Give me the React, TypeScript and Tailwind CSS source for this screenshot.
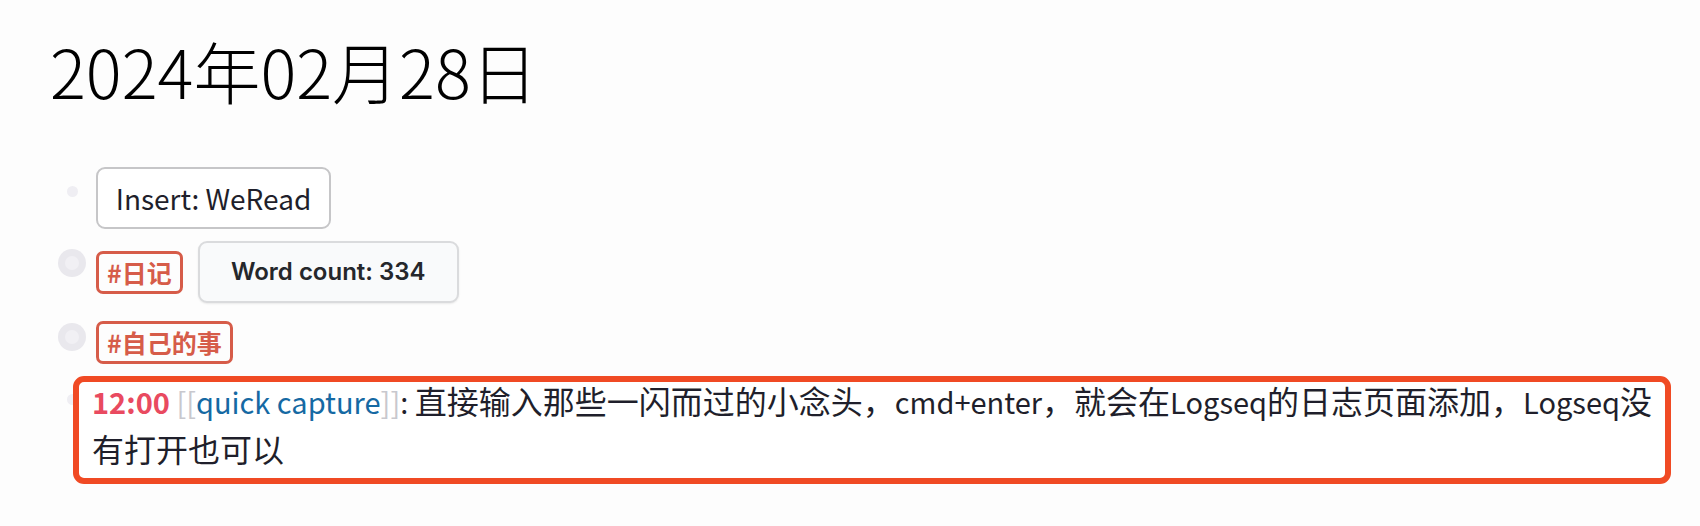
import React from "react";

const CJK = '"Noto Sans CJK SC", "Noto Sans", sans-serif';

function Bullet({ big, offset }: { big?: boolean; offset: number }) {
  return (
    <div className="w-12 flex justify-center shrink-0" style={{ paddingTop: offset }}>
      {big ? (
        <div className="w-[28px] h-[28px] rounded-full bg-[#e9e8ed] flex items-center justify-center">
          <div className="w-[14px] h-[14px] rounded-full bg-[#f1f0f4]" />
        </div>
      ) : (
        <div className="w-[11px] h-[11px] rounded-full bg-[#efeef3]" />
      )}
    </div>
  );
}

function Tag({ children }: { children: React.ReactNode }) {
  return (
    <span
      className="inline-flex items-center h-[43px] px-[8px] border-[3px] border-[#d65c49] rounded-[7px] text-[#d65c49] text-[25px] font-bold leading-none"
      style={{ fontFamily: CJK }}
    >
      {children}
    </span>
  );
}

function L({ children, className = "" }: { children: React.ReactNode; className?: string }) {
  return <span className={`text-[29px] ${className}`}>{children}</span>;
}

export default function App() {
  return (
    <div className="min-h-[526px] w-[1700px] bg-[#fdfdfd] pl-[48px] pt-[24px]" style={{ fontFamily: CJK }}>
      <h1 className="text-[67px] leading-[92px] font-light text-black ml-[2px]">2024年02月28日</h1>

      <div className="mt-[51px] flex flex-col">
        {/* Row 1 */}
        <div className="flex items-start h-[62px]">
          <Bullet offset={19} />
          <div className="h-[62px] w-[235px] border-2 border-[#c6c6c8] rounded-[9px] bg-white flex items-center justify-center text-[28px] text-[#1f1f2b]">
            Insert: WeRead
          </div>
        </div>

        {/* Row 2 */}
        <div className="mt-[12px] flex items-start h-[62px]">
          <Bullet big offset={8} />
          <div className="flex items-center h-[62px] gap-[15px]">
            <Tag>#日记</Tag>
            <div
              className="h-[62px] w-[261px] border-2 border-[#dadbdd] rounded-[9px] bg-[#f9fafb] shadow-[0_1px_2px_rgba(0,0,0,0.08)] flex items-center justify-center text-[24px] font-semibold text-[#25272b]"
              style={{ fontFamily: '"Inter", "Liberation Sans", sans-serif' }}
            >
              Word count: 334
            </div>
          </div>
        </div>

        {/* Row 3 */}
        <div className="mt-[18px] flex items-start h-[41px]">
          <Bullet big offset={2} />
          <Tag>#自己的事</Tag>
        </div>

        {/* Row 4 */}
        <div className="mt-[14px] flex items-start">
          <Bullet offset={18} />
          <div className="-ml-[23px] w-[1598px] border-[6px] border-[#f04a24] rounded-[11px] bg-white pl-[13px] pr-[4px] pt-0 pb-[1px] text-[32px] leading-[47px] text-[#1f1f2b] whitespace-nowrap">
            <div className="-mt-[5px] mb-[5px]">
              <L className="font-bold text-[#e94a60]">12:00</L>
              <L> </L>
              <L className="text-[#c8c8ce]">[[</L>
              <L className="text-[#1569a3]">quick capture</L>
              <L className="text-[#c8c8ce]">]]</L>
              <L>: </L>
              直接输入那些一闪而过的小念头，<L>cmd+enter</L>，就会在<L>Logseq</L>的日志页面添加，<L>Logseq</L>没
              <br />
              有打开也可以
            </div>
          </div>
        </div>
      </div>
    </div>
  );
}
